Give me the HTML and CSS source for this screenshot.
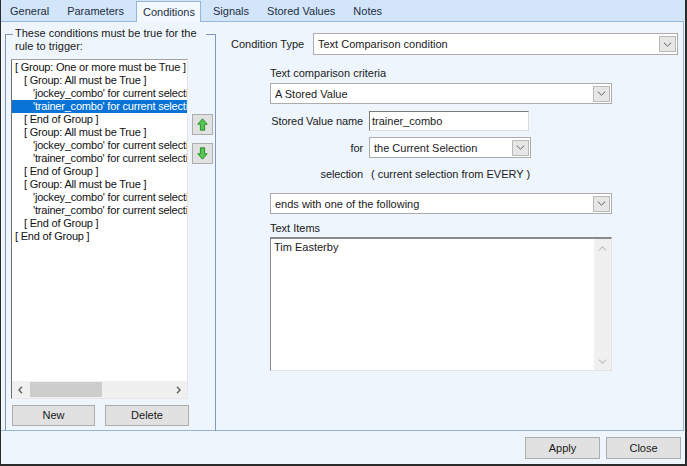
FILE: index.html
```html
<!DOCTYPE html>
<html>
<head>
<meta charset="utf-8">
<link rel="stylesheet" href="styles.css">
</head>
<body>
<div class="window">
  <div class="tabs">
    <span class="tab">General</span>
    <span class="tab">Parameters</span>
    <span class="tab active">Conditions</span>
    <span class="tab">Signals</span>
    <span class="tab">Stored Values</span>
    <span class="tab">Notes</span>
  </div>
  <div class="panel">
    <div class="group">
      <div class="legend">These conditions must be true for the<br>rule to trigger:</div>
      <div class="group-body">
        <div class="list-col">
          <div class="listbox">
            <div class="rows">
              <div class="row l0">[ Group: One or more must be True ]</div>
              <div class="row l1">[ Group: All must be True ]</div>
              <div class="row l2">'jockey_combo' for current selection</div>
              <div class="row l2 sel">'trainer_combo' for current selection</div>
              <div class="row l1">[ End of Group ]</div>
              <div class="row l1">[ Group: All must be True ]</div>
              <div class="row l2">'jockey_combo' for current selection</div>
              <div class="row l2">'trainer_combo' for current selection</div>
              <div class="row l1">[ End of Group ]</div>
              <div class="row l1">[ Group: All must be True ]</div>
              <div class="row l2">'jockey_combo' for current selection</div>
              <div class="row l2">'trainer_combo' for current selection</div>
              <div class="row l1">[ End of Group ]</div>
              <div class="row l0">[ End of Group ]</div>
            </div>
            <div class="hscroll">
              <span class="sarrow"><svg width="5" height="8" viewBox="0 0 5 8"><path d="M4 0.8 L1 4 L4 7.2" fill="none" stroke="#606060" stroke-width="1.4"/></svg></span>
              <div class="track"><div class="thumb"></div></div>
              <span class="sarrow"><svg width="5" height="8" viewBox="0 0 5 8"><path d="M1 0.8 L4 4 L1 7.2" fill="none" stroke="#606060" stroke-width="1.4"/></svg></span>
            </div>
          </div>
          <div class="list-btns">
            <button class="btn new">New</button>
            <button class="btn del">Delete</button>
          </div>
        </div>
        <div class="move-col">
          <button class="move up"><svg width="11" height="13" viewBox="0 0 11 13"><path d="M5.5 0.8 L10.2 6.2 H7.6 V12.2 H3.4 V6.2 H0.8 Z" fill="#53c653" stroke="#2c8f2c" stroke-width="1"/></svg></button>
          <button class="move down"><svg width="11" height="13" viewBox="0 0 11 13"><path d="M5.5 12.2 L10.2 6.8 H7.6 V0.8 H3.4 V6.8 H0.8 Z" fill="#53c653" stroke="#2c8f2c" stroke-width="1"/></svg></button>
        </div>
      </div>
    </div>
    <div class="form">
      <div class="type-row">
        <span class="type-label">Condition Type</span>
        <div class="combo wide">
          <span class="combo-text">Text Comparison condition</span>
          <span class="drop"><svg width="9" height="5" viewBox="0 0 9 5"><path d="M0.8 0.6 L4.5 4.2 L8.2 0.6" fill="none" stroke="#606060" stroke-width="1"/></svg></span>
        </div>
      </div>
      <div class="section">
        <div class="caption first">Text comparison criteria</div>
        <div class="combo full crit">
          <span class="combo-text">A Stored Value</span>
          <span class="drop"><svg width="9" height="5" viewBox="0 0 9 5"><path d="M0.8 0.6 L4.5 4.2 L8.2 0.6" fill="none" stroke="#606060" stroke-width="1"/></svg></span>
        </div>
        <div class="field-row name-row">
          <span class="field-label">Stored Value name</span>
          <div class="textbox">trainer_combo</div>
        </div>
        <div class="field-row for-row">
          <span class="field-label">for</span>
          <div class="combo small">
            <span class="combo-text">the Current Selection</span>
            <span class="drop"><svg width="9" height="5" viewBox="0 0 9 5"><path d="M0.8 0.6 L4.5 4.2 L8.2 0.6" fill="none" stroke="#606060" stroke-width="1"/></svg></span>
          </div>
        </div>
        <div class="field-row sel-row">
          <span class="field-label">selection</span>
          <span class="sel-value">( current selection from EVERY )</span>
        </div>
        <div class="combo full ends">
          <span class="combo-text">ends with one of the following</span>
          <span class="drop"><svg width="9" height="5" viewBox="0 0 9 5"><path d="M0.8 0.6 L4.5 4.2 L8.2 0.6" fill="none" stroke="#606060" stroke-width="1"/></svg></span>
        </div>
        <div class="caption items">Text Items</div>
        <div class="textarea">
          <div class="ta-text">Tim Easterby</div>
          <div class="vscroll">
            <svg width="9" height="5" viewBox="0 0 9 5"><path d="M0.8 4.4 L4.5 0.8 L8.2 4.4" fill="none" stroke="#c2c2c2" stroke-width="1.2"/></svg>
            <svg width="9" height="5" viewBox="0 0 9 5"><path d="M0.8 0.6 L4.5 4.2 L8.2 0.6" fill="none" stroke="#c2c2c2" stroke-width="1.2"/></svg>
          </div>
        </div>
      </div>
    </div>
  </div>
  <div class="footer">
    <button class="btn foot">Apply</button>
    <button class="btn foot">Close</button>
  </div>
</div>
</body>
</html>
```

FILE: styles.css
```css
* { box-sizing: border-box; }
html, body { margin: 0; padding: 0; }
body {
  width: 687px;
  height: 466px;
  overflow: hidden;
  font-family: "Liberation Sans", Arial, sans-serif;
  font-size: 11px;
  color: #1a1a1a;
  background: #eef5fd;
}
.window {
  width: 687px;
  height: 466px;
  border-left: 1px solid #2a2a2a;
  border-right: 2px solid #2a2a2a;
  border-bottom: 2px solid #2a2a2a;
  background: #eef5fd;
  display: flex;
  flex-direction: column;
}
.tabs {
  height: 21px;
  flex: none;
  display: flex;
  align-items: flex-end;
  background: #d3e5f8;
}
.tab {
  height: 19px;
  line-height: 19px;
  padding: 0 9px;
  color: #1f2f45;
  white-space: nowrap;
}
.tab.active {
  position: relative;
  z-index: 1;
  height: 21px;
  line-height: 20px;
  margin: 0 3px -1px 3px;
  padding: 0 5px 0 6px;
  border: 1px solid #98b6dc;
  border-bottom: none;
  background: #f2f8fe;
}
.panel {
  height: 410px;
  flex: none;
  margin-right: 1px;
  border: 1px solid #98b6dc;
  border-left: none;
  display: flex;
  background: #eef5fd;
}
.group {
  width: 211px;
  margin: 12px 0 -1px 4px;
  border: 1px solid #7f97b8;
  border-bottom: none;
  display: flex;
  flex-direction: column;
}
.legend {
  align-self: flex-start;
  margin: -8px 0 0 7px;
  padding: 0 2px;
  line-height: 13px;
  width: 193px;
  background: #eef5fd;
  color: #1a1a1a;
  white-space: nowrap;
}
.group-body {
  display: flex;
  margin-top: 6px;
  padding-left: 5px;
}
.list-col {
  width: 178px;
  display: flex;
  flex-direction: column;
}
.listbox {
  width: 177px;
  height: 340px;
  background: #fff;
  border-top: 1px solid #a0a0a0;
  border-left: 1px solid #6e6e6e;
  border-right: 1px solid #e6e6e6;
  border-bottom: 1px solid #e6e6e6;
  display: flex;
  flex-direction: column;
  overflow: hidden;
}
.rows {
  flex: 1;
  padding-top: 1px;
  overflow: hidden;
}
.row {
  height: 13px;
  line-height: 13px;
  white-space: nowrap;
  overflow: hidden;
  color: #111;
  letter-spacing: -0.2px;
}
.row.l0 { padding-left: 3px; }
.row.l1 { padding-left: 12px; }
.row.l2 { padding-left: 21px; }
.row.sel { background: #0a74d6; color: #fff; }
.hscroll {
  height: 17px;
  flex: none;
  display: flex;
  background: #f0f0f0;
}
.sarrow {
  width: 17px;
  display: flex;
  align-items: center;
  justify-content: center;
}
.track {
  flex: 1;
  padding: 1px 0;
}
.thumb {
  width: 72px;
  height: 100%;
  margin-left: 1px;
  background: #cdcdcd;
}
.list-btns {
  display: flex;
  margin-top: 6px;
  padding-left: 1px;
}
.btn {
  font: inherit;
  color: #1a1a1a;
  background: #e1e1e1;
  border: 1px solid #adadad;
  padding: 0;
  height: 21px;
  line-height: 19px;
  text-align: center;
}
.btn.new { width: 83px; }
.btn.del { width: 84px; margin-left: 10px; }
.move-col {
  display: flex;
  flex-direction: column;
  margin-left: 3px;
  padding-top: 55px;
}
.move {
  width: 21px;
  height: 21px;
  padding: 0;
  background: #e1e1e1;
  border: 1px solid #adadad;
  display: flex;
  align-items: center;
  justify-content: center;
}
.move.down { margin-top: 8px; }
.form {
  flex: 1;
  padding: 11px 5px 0 15px;
  display: flex;
  flex-direction: column;
}
.type-row {
  display: flex;
  align-items: center;
  height: 22px;
}
.type-label {
  width: 82px;
  flex: none;
  white-space: nowrap;
}
.combo {
  height: 21px;
  background: #fff;
  border: 1px solid #acacac;
  display: flex;
  align-items: center;
  padding-left: 4px;
}
.combo.wide { flex: 1; height: 22px; }
.combo-text { flex: 1; white-space: nowrap; overflow: hidden; }
.drop {
  width: 17px;
  height: 16px;
  margin-right: 1px;
  background: #e6e6e6;
  border: 1px solid #b9b9b9;
  display: flex;
  align-items: center;
  justify-content: center;
}
.section {
  padding-left: 39px;
  display: flex;
  flex-direction: column;
}
.caption { line-height: 13px; white-space: nowrap; }
.caption.first { margin-top: 12px; }
.combo.full { width: 342px; }
.combo.crit { margin-top: 3px; }
.field-row {
  display: flex;
  align-items: center;
}
.field-label {
  width: 93px;
  flex: none;
  text-align: right;
  margin-right: 6px;
  white-space: nowrap;
  letter-spacing: -0.1px;
}
.name-row { margin-top: 7px; height: 20px; }
.textbox {
  width: 160px;
  height: 20px;
  line-height: 18px;
  background: #fff;
  border-top: 1px solid #7a7a7a;
  border-left: 1px solid #7a7a7a;
  border-right: 1px solid #dcdcdc;
  border-bottom: 1px solid #dcdcdc;
  padding-left: 2px;
}
.for-row { margin-top: 6px; }
.combo.small { width: 162px; }
.sel-row { margin-top: 10px; height: 13px; line-height: 13px; }
.sel-value { padding-left: 2px; white-space: nowrap; }
.combo.ends { margin-top: 12px; }
.caption.items { margin-top: 8px; }
.textarea {
  margin-top: 2px;
  width: 342px;
  height: 134px;
  background: #fff;
  border-top: 2px solid #8a8a8a;
  border-left: 1px solid #8a8a8a;
  border-right: 1px solid #e3e3e3;
  border-bottom: 1px solid #e3e3e3;
  display: flex;
}
.ta-text {
  flex: 1;
  padding: 2px 0 0 3px;
  line-height: 13px;
}
.vscroll {
  width: 17px;
  background: #f0f0f0;
  display: flex;
  flex-direction: column;
  justify-content: space-between;
  align-items: center;
  padding: 7px 0 6px;
}
.footer {
  flex: 1;
  display: flex;
  justify-content: flex-end;
  align-items: flex-start;
  padding: 6px 4px 0 0;
  background: #eef5fd;
}
.btn.foot { width: 75px; height: 22px; margin-left: 6px; }
```
